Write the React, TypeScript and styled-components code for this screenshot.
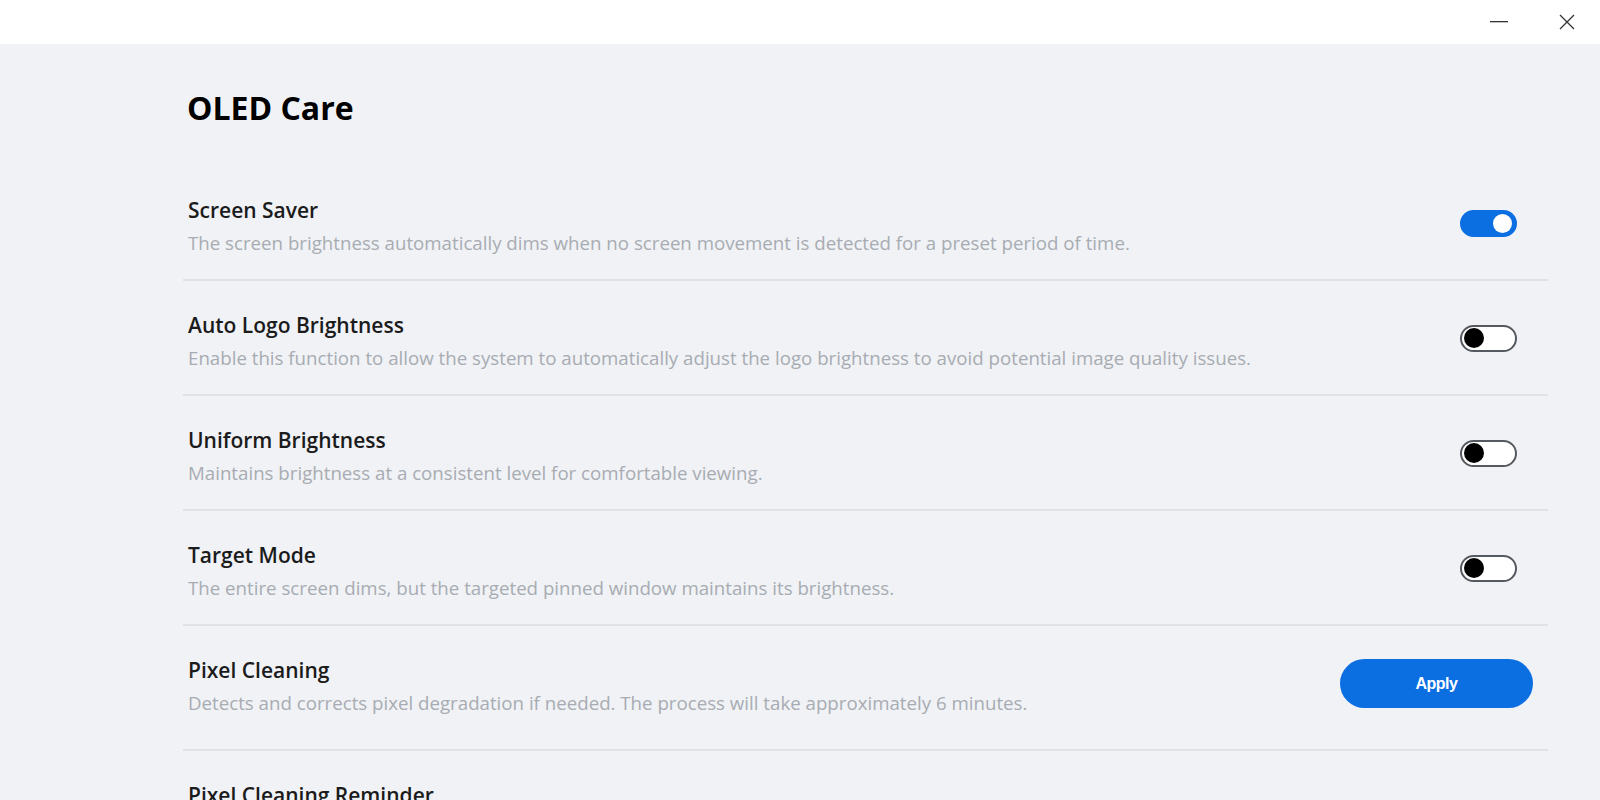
import { createGlobalStyle } from 'styled-components';
import styled from 'styled-components';

const GlobalStyle = createGlobalStyle`
  html, body {
    margin: 0;
    padding: 0;
    background: #f0f2f6;
    font-family: "Open Sans", "Noto Sans", "Liberation Sans", sans-serif;
  }
`;

type Item = {
  title: string;
  desc: string;
  kind: 'toggle' | 'button' | 'none';
  on?: boolean;
};

const items: Item[] = [
  {
    title: 'Screen Saver',
    desc: 'The screen brightness automatically dims when no screen movement is detected for a preset period of time.',
    kind: 'toggle',
    on: true,
  },
  {
    title: 'Auto Logo Brightness',
    desc: 'Enable this function to allow the system to automatically adjust the logo brightness to avoid potential image quality issues.',
    kind: 'toggle',
  },
  {
    title: 'Uniform Brightness',
    desc: 'Maintains brightness at a consistent level for comfortable viewing.',
    kind: 'toggle',
  },
  {
    title: 'Target Mode',
    desc: 'The entire screen dims, but the targeted pinned window maintains its brightness.',
    kind: 'toggle',
  },
  {
    title: 'Pixel Cleaning',
    desc: 'Detects and corrects pixel degradation if needed. The process will take approximately 6 minutes.',
    kind: 'button',
  },
  {
    // rest of this row is below the fold
    title: 'Pixel Cleaning Reminder',
    desc: '',
    kind: 'none',
  },
];

const Window = styled.div`
  width: 1600px;
  height: 800px;
  overflow: hidden;
  display: flex;
  flex-direction: column;
`;

const TitleBar = styled.div`
  height: 44px;
  background: #ffffff;
  display: flex;
  justify-content: flex-end;
  align-items: center;
  flex-shrink: 0;
`;

const WinButton = styled.div<{ $gap?: number }>`
  width: 66px;
  height: 44px;
  margin-right: ${(p) => p.$gap ?? 0}px;
  display: flex;
  align-items: center;
  justify-content: center;
  color: #333;
`;

const Content = styled.div`
  padding: 44px 52px 0 183px;
  display: flex;
  flex-direction: column;
`;

const PageTitle = styled.h1`
  margin: 0 0 38px 4px;
  font-size: 32px;
  line-height: 40px;
  font-weight: 700;
  color: #000;
`;

const Row = styled.div<{ $roomy?: boolean }>`
  display: flex;
  align-items: center;
  justify-content: space-between;
  padding: ${(p) => (p.$roomy ? '30px 15px 32px 5px' : '30px 15px 22px 5px')};
  border-bottom: 2px solid #dfe2e6;
`;

const TextBlock = styled.div`
  display: flex;
  flex-direction: column;
  gap: 5px;
`;

const ItemTitle = styled.div`
  font-size: 21px;
  line-height: 28px;
  font-weight: 600;
  color: #1b1b1b;
`;

const ItemDesc = styled.div`
  font-size: 18.7px;
  line-height: 28px;
  color: #a8acb2;
`;

const Switch = styled.div<{ $on?: boolean }>`
  width: 57px;
  height: 27px;
  box-sizing: border-box;
  border-radius: 14px;
  margin: 0 16px 7px 0;
  display: flex;
  align-items: center;
  padding: 0 3px;
  justify-content: ${(p) => (p.$on ? 'flex-end' : 'flex-start')};
  background: ${(p) => (p.$on ? '#0b6fe2' : '#ffffff')};
  border: 2px solid ${(p) => (p.$on ? '#0b6fe2' : '#555a60')};
`;

const Knob = styled.div<{ $on?: boolean }>`
  width: ${(p) => (p.$on ? '19px' : '20px')};
  height: ${(p) => (p.$on ? '19px' : '20px')};
  border-radius: 50%;
  background: ${(p) => (p.$on ? '#ffffff' : '#000000')};
  margin-left: ${(p) => (p.$on ? '0' : '-1px')};
`;

const ApplyButton = styled.button`
  width: 193px;
  height: 49px;
  margin-bottom: 6px;
  border: none;
  border-radius: 25px;
  background: #0b6fe2;
  color: #ffffff;
  font-family: "Liberation Sans", Arial, sans-serif;
  font-size: 16px;
  font-weight: 700;
  letter-spacing: -0.5px;
`;

const App = () => {
  return (
    <Window>
      <GlobalStyle />
      <TitleBar>
        <WinButton $gap={2}>
          <svg width="18" height="2" viewBox="0 0 18 2">
            <rect x="0" y="0" width="18" height="1.3" fill="#333" />
          </svg>
        </WinButton>
        <WinButton>
          <svg width="16" height="16" viewBox="0 0 16 16">
            <path d="M1 1 L15 15 M15 1 L1 15" stroke="#333" strokeWidth="1.3" fill="none" />
          </svg>
        </WinButton>
      </TitleBar>
      <Content>
        <PageTitle>OLED Care</PageTitle>
        {items.map((it) => (
          <Row key={it.title} $roomy={it.kind === 'button'}>
            <TextBlock>
              <ItemTitle>{it.title}</ItemTitle>
              {it.desc && <ItemDesc>{it.desc}</ItemDesc>}
            </TextBlock>
            {it.kind === 'toggle' && (
              <Switch $on={it.on}>
                <Knob $on={it.on} />
              </Switch>
            )}
            {it.kind === 'button' && <ApplyButton>Apply</ApplyButton>}
          </Row>
        ))}
      </Content>
    </Window>
  );
};

export default App;
